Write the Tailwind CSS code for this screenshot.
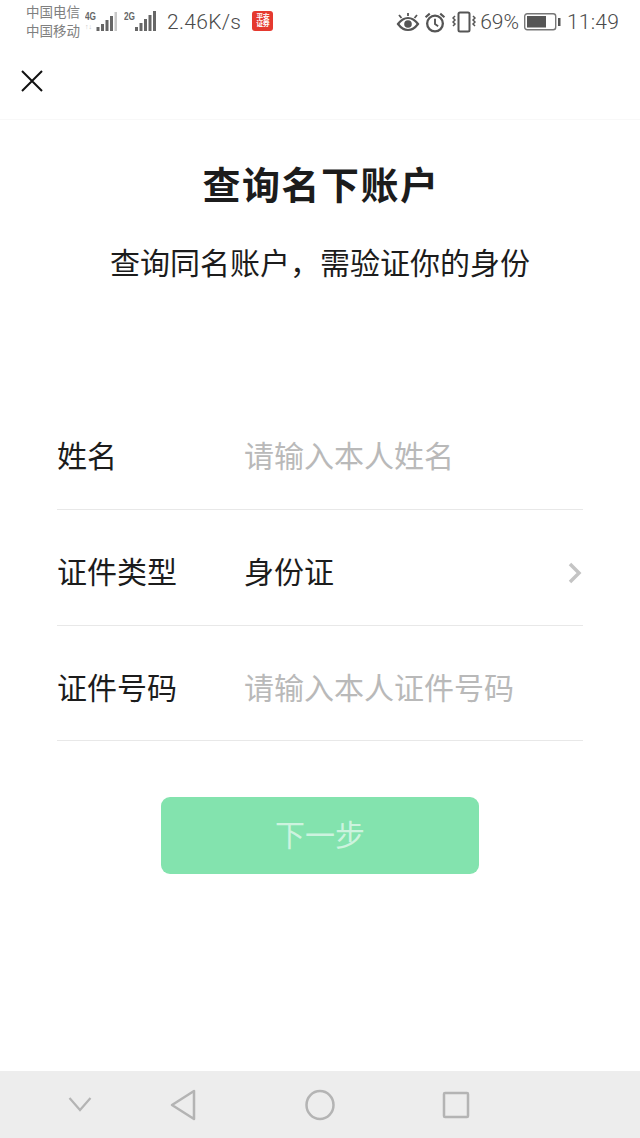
<!DOCTYPE html>
<html lang="zh-CN">
  <head>
    <meta charset="UTF-8" />
    <meta name="viewport" content="width=device-width, initial-scale=1.0" />
    <title>查询名下账户</title>
    <script src="https://cdn.jsdelivr.net/npm/@tailwindcss/browser@4"></script>
  </head>
  <body class="bg-white font-['Liberation_Sans','Noto_Sans_CJK_SC',sans-serif]">
    <main class="w-[640px] h-[1138px] flex flex-col overflow-hidden">
      <!-- Status bar -->
      <div class="h-[44px] shrink-0 flex items-start text-[#666666]">
        <div class="ml-[26px] mt-[3px] w-[56px] flex flex-col text-[13.5px] leading-[19px] text-[#808080] whitespace-nowrap">
          <span>中国电信</span>
          <span>中国移动</span>
        </div>
        <div class="ml-[3px] mt-[10px] flex items-start">
          <svg width="32" height="22" viewBox="0 0 32 22">
            <text x="0" y="10" font-size="10.500" font-weight="700" fill="#666" font-family="Liberation Sans" textLength="11" lengthAdjust="spacingAndGlyphs">4G</text>
            <text x="0" y="19" font-size="7" fill="#c4c4c4" font-family="Liberation Sans">↑↓</text>
            <rect x="11.500" y="17" width="3" height="4" fill="#666" />
            <rect x="16" y="14" width="3" height="7" fill="#666" />
            <rect x="20.500" y="10" width="3" height="11" fill="#666" />
            <rect x="25" y="6" width="3" height="15" fill="#666" />
            <rect x="29.500" y="2" width="2.500" height="19" fill="#c8c8c8" />
          </svg>
          <svg class="ml-[7px]" width="32" height="22" viewBox="0 0 32 22">
            <text x="0" y="10" font-size="10.500" font-weight="700" fill="#666" font-family="Liberation Sans" textLength="11" lengthAdjust="spacingAndGlyphs">2G</text>
            <rect x="11" y="17" width="3" height="4" fill="#666" />
            <rect x="15.500" y="13" width="3" height="8" fill="#666" />
            <rect x="20" y="9" width="3" height="12" fill="#666" />
            <rect x="24.500" y="5" width="3" height="16" fill="#666" />
            <rect x="29" y="1" width="3" height="20" fill="#666" />
          </svg>
        </div>
        <span class="ml-[11px] mt-[10px] text-[21px] leading-[24px] font-['Roboto'] font-light tracking-[0.3px] text-[#4a4a4a]">2.46K/s</span>
        <div class="ml-[11px] mt-[11px] w-[21px] h-[20px] rounded-[3px] bg-[#e5392f] flex flex-col items-center text-white text-[7px] leading-[7px] font-bold pt-[2px] overflow-hidden">
          <span class="tracking-[-0.5px]">平安</span>
          <span class="tracking-[-0.5px]">证券</span>
        </div>
        <div class="ml-auto mr-[21px] mt-[9px] flex items-center h-[26px] text-[#4a4a4a]">
          <svg width="24" height="20" viewBox="0 0 24 20" fill="none" stroke="#555" stroke-width="2.200" class="ml-[-1px]">
            <path d="M2 12c3-4 6-6 10-6s7 2 10 6c-3 4-6 6-10 6s-7-2-10-6z" />
            <circle cx="12" cy="12" r="3.800" fill="#555" stroke="none" />
            <path d="M3 3l2.500 3M12 1v3M21 3l-2.500 3" stroke-width="1.800" />
          </svg>
          <svg class="ml-[4px]" width="22" height="21" viewBox="0 0 21 20" fill="none" stroke="#555" stroke-width="2.200">
            <circle cx="10.500" cy="11" r="7.500" />
            <path d="M10.500 6.500v5l3 2" stroke-width="1.800" />
            <path d="M1.500 5l4-3.500M19.500 5l-4-3.500" stroke-width="2" />
          </svg>
          <svg class="ml-[6px]" width="24" height="24" viewBox="0 0 24 22" fill="none" stroke="#555">
            <rect x="6.500" y="1.500" width="11" height="19" rx="1.500" stroke-width="2" />
            <path d="M3 5l-2 2 2 2-2 2 2 2-2 2M21 5l2 2-2 2 2 2-2 2 2 2" stroke-width="1.500" />
          </svg>
          <span class="ml-[4px] text-[21px] leading-[24px] font-['Roboto'] font-light">69%</span>
          <svg class="ml-[5px]" width="37" height="18" viewBox="0 0 37 18" fill="none">
            <rect x="0.700" y="0.700" width="31" height="16" rx="2.500" stroke="#777" stroke-width="1.400" />
            <rect x="3" y="3" width="19" height="11.500" fill="#555" />
            <rect x="34" y="5" width="2.500" height="8" fill="#555" />
          </svg>
          <span class="ml-[6px] text-[21px] leading-[24px] font-['Roboto'] font-light tracking-[0.2px]">11:49</span>
        </div>
      </div>

      <!-- Header -->
      <div class="h-[76px] shrink-0 flex items-center pl-[20px] border-b border-[#f8f8f8]">
        <svg width="24" height="24" viewBox="0 0 24 24" fill="none" stroke="#111" stroke-width="2" class="mt-[-1px]">
          <path d="M2 2l20 20M22 2L2 22" />
        </svg>
      </div>

      <!-- Title -->
      <h1 class="mt-[41px] pl-[2px] text-center text-[38px] leading-[50px] font-bold text-[#1c1c1c] tracking-[1.500px]">查询名下账户</h1>
      <p class="mt-[33px] text-center text-[30px] leading-[40px] text-[#1c1c1c]">查询同名账户，需验证你的身份</p>

      <!-- Form -->
      <div class="mt-[110px] mx-[57px] flex flex-col text-[30px] text-[#1c1c1c]">
        <div class="h-[116px] pt-[10px] flex items-center border-b border-[#e8e8e8]">
          <span class="w-[187px]">姓名</span>
          <span class="text-[#b9b9b9]">请输入本人姓名</span>
        </div>
        <div class="h-[116px] pt-[10px] flex items-center border-b border-[#e8e8e8]">
          <span class="w-[187px]">证件类型</span>
          <span>身份证</span>
          <svg class="ml-auto mr-[1px]" width="14" height="22" viewBox="0 0 14 22" fill="none" stroke="#c4c4c4" stroke-width="3.500">
            <path d="M2 2l9 9-9 9" />
          </svg>
        </div>
        <div class="h-[115px] pt-[10px] flex items-center border-b border-[#e8e8e8]">
          <span class="w-[187px]">证件号码</span>
          <span class="text-[#b9b9b9]">请输入本人证件号码</span>
        </div>
      </div>

      <!-- Next button -->
      <button class="mt-[56px] ml-[161px] w-[318px] h-[77px] rounded-[9px] bg-[#83e3ae] text-[#cdf3df] text-[30px] shrink-0">下一步</button>

      <!-- Nav bar -->
      <div class="mt-auto h-[67px] shrink-0 bg-[#ededed] flex items-center pl-[68px]">
        <svg width="24" height="16" viewBox="0 0 24 16" fill="none" stroke="#b4b4b4" stroke-width="2.200" class="mt-[-2px]">
          <path d="M1.500 2L12 14 22.500 2" />
        </svg>
        <svg class="ml-[78px]" width="26" height="32" viewBox="0 0 26 32" fill="none" stroke="#b4b4b4" stroke-width="2.500" stroke-linejoin="round">
          <path d="M24 2v28L2 16z" />
        </svg>
        <svg class="ml-[109px]" width="30" height="32" viewBox="0 0 30 32" fill="none" stroke="#b4b4b4" stroke-width="2.500">
          <ellipse cx="15" cy="16" rx="13.500" ry="14" />
        </svg>
        <svg class="ml-[107px]" width="28" height="28" viewBox="0 0 28 28" fill="none" stroke="#b4b4b4" stroke-width="2.500" stroke-linejoin="round">
          <rect x="2" y="2" width="24" height="24" rx="1" />
        </svg>
      </div>
    </main>
  </body>
</html>
